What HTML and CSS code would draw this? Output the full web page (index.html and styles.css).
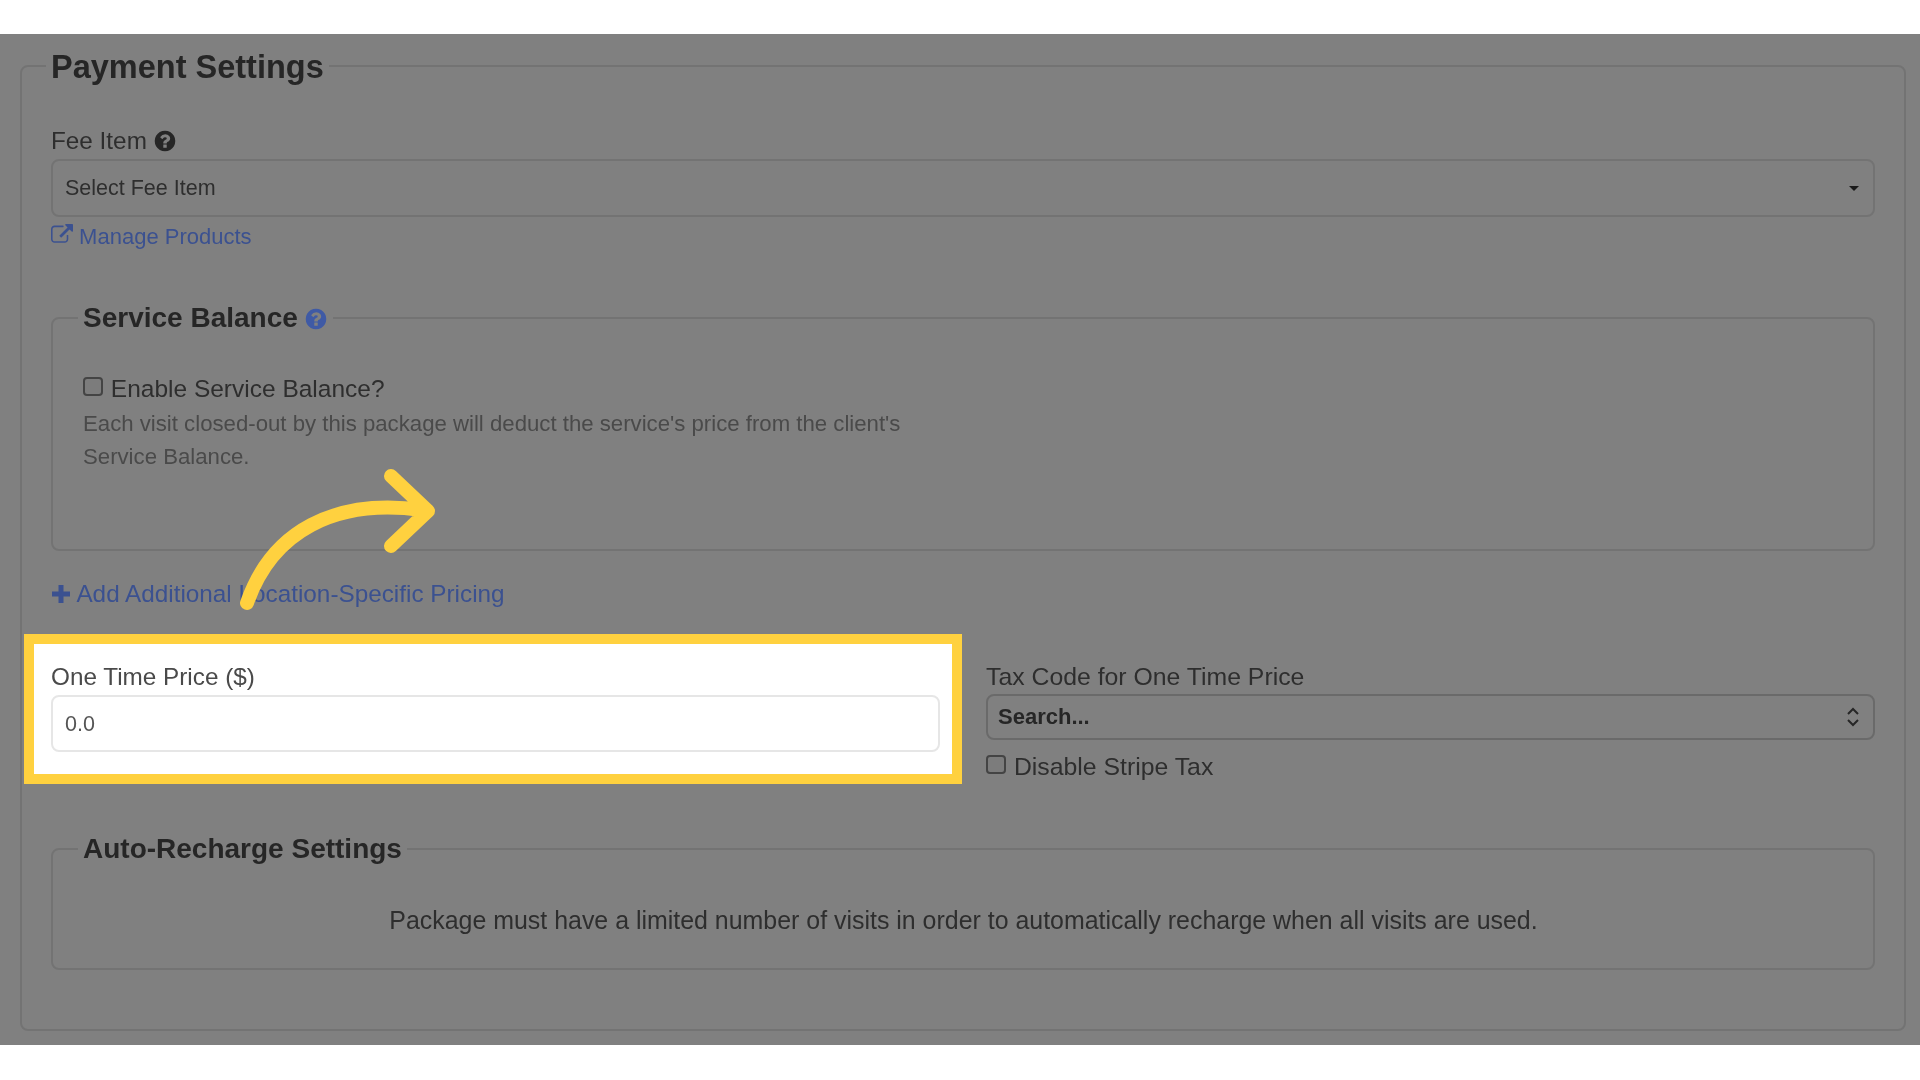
FILE: index.html
```html
<!DOCTYPE html>
<html lang="en">
<head>
    <meta charset="UTF-8">
    <title>Payment Settings</title>
    <link rel="stylesheet" href="styles.css">
</head>
<body>
    <main class="panel">
        <fieldset class="box box-outer">
            <legend class="legend-lg">Payment Settings</legend>

            <div class="label fee-label">
                Fee Item
                <svg class="icon-help" viewBox="0 0 1792 1792"><path d="M1024 1376v-192q0-14-9-23t-23-9h-192q-14 0-23 9t-9 23v192q0 14 9 23t23 9h192q14 0 23-9t9-23zm256-672q0-88-55.5-163t-138.5-116-170-41q-243 0-371 213-15 24 8 42l132 100q7 6 19 6 16 0 25-12 53-68 86-92 34-24 86-24 48 0 85.5 26t37.5 59q0 38-20 61t-68 45q-63 28-115.5 86.5t-52.5 125.5v36q0 14 9 23t23 9h192q14 0 23-9t9-23q0-19 21.5-49.5t54.5-49.5q32-18 49-28.5t46-35 44.5-48 28-60.5 12.5-81zm384 192q0 209-103 385.5t-279.5 279.5-385.5 103-385.5-103-279.5-279.5-103-385.5 103-385.5 279.5-279.5 385.5-103 385.5 103 279.5 279.5 103 385.5z"/></svg>
            </div>
            <div class="select select-fee">
                <span>Select Fee Item</span>
                <span class="caret"></span>
            </div>
            <a class="link link-manage">
                <svg class="icon-ext" viewBox="0 0 1792 1792"><path d="M1408 928v320q0 119-84.5 203.5t-203.5 84.5h-832q-119 0-203.5-84.5t-84.5-203.5v-832q0-119 84.5-203.5t203.5-84.5h704q14 0 23 9t9 23v64q0 14-9 23t-23 9h-704q-66 0-113 47t-47 113v832q0 66 47 113t113 47h832q66 0 113-47t47-113v-320q0-14 9-23t23-9h64q14 0 23 9t9 23zm384-864v512q0 26-19 45t-45 19-45-19l-176-176-652 652q-10 10-23 10t-23-10l-114-114q-10-10-10-23t10-23l652-652-176-176q-19-19-19-45t19-45 45-19h512q26 0 45 19t19 45z"/></svg>
                Manage Products
            </a>

            <fieldset class="box box-service">
                <legend class="legend-md">
                    Service Balance
                    <svg class="icon-help icon-help-blue" viewBox="0 0 1792 1792"><path d="M1024 1376v-192q0-14-9-23t-23-9h-192q-14 0-23 9t-9 23v192q0 14 9 23t23 9h192q14 0 23-9t9-23zm256-672q0-88-55.5-163t-138.5-116-170-41q-243 0-371 213-15 24 8 42l132 100q7 6 19 6 16 0 25-12 53-68 86-92 34-24 86-24 48 0 85.5 26t37.5 59q0 38-20 61t-68 45q-63 28-115.5 86.5t-52.5 125.5v36q0 14 9 23t23 9h192q14 0 23-9t9-23q0-19 21.5-49.5t54.5-49.5q32-18 49-28.5t46-35 44.5-48 28-60.5 12.5-81zm384 192q0 209-103 385.5t-279.5 279.5-385.5 103-385.5-103-279.5-279.5-103-385.5 103-385.5 279.5-279.5 385.5-103 385.5 103 279.5 279.5 103 385.5z"/></svg>
                </legend>
                <label class="check">
                    <input type="checkbox">
                    Enable Service Balance?
                </label>
                <p class="help">Each visit closed-out by this package will deduct the service's price from the client's Service Balance.</p>
            </fieldset>

            <a class="link link-add">
                <svg class="icon-plus" viewBox="0 0 20 20"><path d="M7.5 1h5v6.500H19v5h-6.500V19h-5v-6.500H1v-5h6.500z"/></svg>
                Add Additional Location-Specific Pricing
            </a>

            <div class="price-row">
                <div class="highlight">
                    <div class="label label-dark">One Time Price ($)</div>
                    <input class="price-input" type="text" value="0.0">
                </div>
                <div class="tax-col">
                    <div class="label label-tax">Tax Code for One Time Price</div>
                    <div class="select select-tax">
                        <span>Search...</span>
                        <svg class="icon-updown" viewBox="0 0 14 20"><path d="M2 7l5-5 5 5M2 13l5 5 5-5"/></svg>
                    </div>
                    <label class="check check-tax">
                        <input type="checkbox">
                        Disable Stripe Tax
                    </label>
                </div>
            </div>

            <fieldset class="box box-recharge">
                <legend class="legend-md">Auto-Recharge Settings</legend>
                <p class="recharge-text">Package must have a limited number of visits in order to automatically recharge when all visits are used.</p>
            </fieldset>
        </fieldset>

        <!-- callout arrow -->
        <svg class="arrow" viewBox="0 0 1920 1080">
            <path d="M247 603C272 531 335 498 422 510M391 476L428 511L391 546"/>
        </svg>
    </main>
</body>
</html>
```

FILE: styles.css
```css
* {
    box-sizing: border-box;
}

body {
    margin: 0;
    padding: 34px 0 35px;
    background-color: #fff;
    font-family: "Liberation Sans", Arial, sans-serif;
    color: #2e2e2e;
}

.panel {
    position: relative;
    height: 1011px;
    padding: 13px 14px 15px 20px;
    background-color: #808080;
}

.box {
    margin: 0;
    min-width: 0;
    border: 2px solid #737373;
    border-radius: 8px;
}

.box-outer {
    padding: 0 29px 59px;
    filter: blur(0.75px);
}

.legend-lg,
.legend-md {
    margin-left: -5px;
    padding: 0 5px;
    font-weight: bold;
    color: #262626;
}

.legend-lg {
    padding-top: 2px;
    font-size: 32.5px;
    line-height: 36px;
}

.legend-md {
    font-size: 28px;
    line-height: 34px;
}

.label {
    font-size: 24.3px;
    line-height: 28px;
}

.fee-label {
    margin-top: 42px;
}

.label-dark {
    color: #4a4a4a;
}

.label-tax {
    font-size: 24.8px;
}

.icon-help {
    width: 24px;
    height: 24px;
    margin-left: -1px;
    vertical-align: -4px;
    fill: #262626;
}

.icon-help-blue {
    margin-left: -2px;
    fill: #3f5aa5;
}

.select {
    display: flex;
    align-items: center;
    justify-content: space-between;
    border: 2px solid #737373;
    border-radius: 8px;
}

.select-fee {
    height: 58px;
    margin-top: 4px;
    padding: 0 14px 0 12px;
    font-size: 21.5px;
}

.caret {
    width: 0;
    height: 0;
    border-left: 5px solid transparent;
    border-right: 5px solid transparent;
    border-top: 5px solid #1a1a1a;
}

.link {
    display: block;
    color: #3b5190;
}

.link-manage {
    margin-top: 7px;
    font-size: 22px;
    line-height: 24px;
}

.icon-ext {
    width: 22px;
    height: 22px;
    vertical-align: -2px;
    fill: #3b5190;
}

.box-service {
    margin-top: 52px;
    padding: 0 29px 76px 30px;
}

.check {
    display: block;
    margin-top: 40px;
    font-size: 24.5px;
    line-height: 28px;
}

.check input {
    appearance: none;
    width: 20px;
    height: 19px;
    margin: 0 1px 0 0;
    border: 2px solid #444;
    border-radius: 4px;
    background-color: #7c7c7c;
    vertical-align: 1px;
}

.help {
    width: 840px;
    margin: 5px 0 0;
    font-size: 22.2px;
    line-height: 32.5px;
    color: #4a4a4a;
}

.link-add {
    margin-top: 29px;
    font-size: 24.3px;
    line-height: 28px;
}

.icon-plus {
    width: 20px;
    height: 20px;
    vertical-align: -2px;
    fill: #3b5190;
}

.price-row {
    display: grid;
    grid-template-columns: 938px 1fr;
    gap: 24px;
    margin-top: 26px;
    margin-left: -27px;
}

.highlight {
    padding: 19px 12px 22px 17px;
    border: 10px solid #ffd13f;
    background-color: #fff;
}

.price-input {
    display: block;
    width: 100%;
    height: 57px;
    margin-top: 4px;
    padding: 2px 12px 0;
    border: 2px solid #e6e6e6;
    border-radius: 8px;
    font-family: inherit;
    font-size: 21.5px;
    color: #555;
}

.tax-col {
    padding-top: 29px;
}

.select-tax {
    height: 46px;
    margin-top: 3px;
    padding: 0 13px 0 10px;
    border-color: #6a6a6a;
    font-size: 22px;
    font-weight: bold;
    color: #262626;
}

.icon-updown {
    width: 14px;
    height: 20px;
    fill: none;
    stroke: #262626;
    stroke-width: 2;
}

.check-tax {
    margin-top: 13px;
    font-size: 24.8px;
}

.box-recharge {
    margin-top: 48px;
    padding: 0 29px 34px 30px;
}

.recharge-text {
    margin: 40px 0 0;
    font-size: 24.93px;
    line-height: 28px;
    text-align: center;
}

.arrow {
    position: absolute;
    left: 0;
    top: -34px;
    width: 1920px;
    height: 1080px;
    fill: none;
    stroke: #ffd13f;
    stroke-width: 14;
    stroke-linecap: round;
    stroke-linejoin: round;
}
```
